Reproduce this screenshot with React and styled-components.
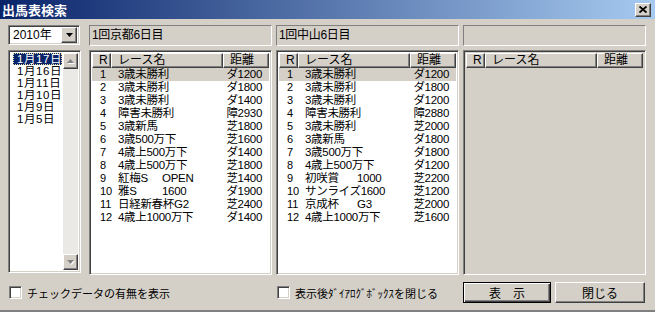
import React from 'react';
import styled, { createGlobalStyle, css } from 'styled-components';

const FONT = '"Liberation Sans", "Noto Sans CJK JP", sans-serif';

const GlobalStyle = createGlobalStyle`
  html, body {
    margin: 0;
    padding: 0;
    background: #d4d0c8;
  }
  * {
    box-sizing: border-box;
  }
`;

const raised = css`
  background: #d4d0c8;
  border: 1px solid;
  border-color: #ffffff #404040 #404040 #ffffff;
  box-shadow: inset -1px -1px #808080;
`;

const sunken = css`
  border: 1px solid;
  border-color: #808080 #ffffff #ffffff #808080;
  box-shadow: inset 1px 1px #404040, inset -1px -1px #d4d0c8;
`;

const DATES = ['1月17日', '1月16日', '1月11日', '1月10日', '1月9日', '1月5日'];

const KYOTO = [
  ['3歳未勝利', 'ダ1200'],
  ['3歳未勝利', 'ダ1800'],
  ['3歳未勝利', 'ダ1400'],
  ['障害未勝利', '障2930'],
  ['3歳新馬', '芝1800'],
  ['3歳500万下', '芝1600'],
  ['4歳上500万下', 'ダ1400'],
  ['4歳上500万下', '芝1800'],
  [['紅梅S', 'OPEN', 44], '芝1400'],
  [['雅S', '1600', 44], 'ダ1900'],
  ['日経新春杯G2', '芝2400'],
  ['4歳上1000万下', 'ダ1400'],
];

const NAKAYAMA = [
  ['3歳未勝利', 'ダ1200'],
  ['3歳未勝利', 'ダ1800'],
  ['3歳未勝利', 'ダ1200'],
  ['障害未勝利', '障2880'],
  ['3歳未勝利', '芝2000'],
  ['3歳新馬', 'ダ1800'],
  ['3歳500万下', 'ダ1800'],
  ['4歳上500万下', 'ダ1200'],
  [['初咲賞', '1000', 52], '芝2200'],
  ['サンライズ1600', '芝1200'],
  [['京成杯', 'G3', 52], '芝2000'],
  ['4歳上1000万下', '芝1600'],
];

export default function App() {
  return (
    <>
      <GlobalStyle />
      <Window>
        <TitleBar>
          <Title>出馬表検索</Title>
          <CloseButton>
            <svg width="8" height="7" viewBox="0 0 8 7">
              <path d="M0.5 0.5 L7.5 6.5 M7.5 0.5 L0.5 6.5" stroke="#000" strokeWidth="1.8" />
            </svg>
          </CloseButton>
        </TitleBar>

        <Main>
          <LeftColumn>
            <ComboBox>
              <ComboText>2010年</ComboText>
              <DropButton>
                <svg width="7" height="4" viewBox="0 0 7 4">
                  <polygon points="0,0 7,0 3.5,4" fill="#000" />
                </svg>
              </DropButton>
            </ComboBox>
            <DateList>
              <DateItems>
                {DATES.map((d, i) => (
                  <DateItem key={d} $selected={i === 0}>{d}</DateItem>
                ))}
              </DateItems>
              <ScrollBar>
                <ScrollArrow>
                  <DisabledTriangle up />
                </ScrollArrow>
                <ScrollArrow>
                  <DisabledTriangle />
                </ScrollArrow>
              </ScrollBar>
            </DateList>
          </LeftColumn>

          <Panels>
            <RacePanel title="1回京都6日目" races={KYOTO} />
            <RacePanel title="1回中山6日目" races={NAKAYAMA} />
            <RacePanel title="" races={[]} empty />
          </Panels>
        </Main>

        <Footer>
          <CheckLabel $width={268}>
            <CheckBox />
            チェックデータの有無を表示
          </CheckLabel>
          <CheckLabel $width={186}>
            <CheckBox />
            表示後ﾀﾞｲｱﾛｸﾞﾎﾞｯｸｽを閉じる
          </CheckLabel>
          <Button $width={88} $default>表　示</Button>
          <Button $width={90}>閉じる</Button>
        </Footer>
      </Window>
    </>
  );
}

function DisabledTriangle({ up }) {
  const pts = up ? '0,4 7,4 3.5,0' : '0,0 7,0 3.5,4';
  return (
    <svg width="8" height="5" viewBox="0 0 8 5">
      <polygon points={pts} fill="#ffffff" transform="translate(1,1)" />
      <polygon points={pts} fill="#808080" />
    </svg>
  );
}

function RacePanel({ title, races, empty }) {
  return (
    <Panel>
      <PanelHeader>{title}</PanelHeader>
      <RaceList $empty={empty}>
        <ListHeader>
          <HeaderCell>R</HeaderCell>
          <HeaderCell>レース名</HeaderCell>
          <HeaderCell>距離</HeaderCell>
        </ListHeader>
        {races.map(([name, dist], i) => (
          <Row key={i} $active={i === 0}>
            <Num>{i + 1}</Num>
            <Name>
              {Array.isArray(name) ? (
                <>
                  <Lead $width={name[2]}>{name[0]}</Lead>
                  {name[1]}
                </>
              ) : name}
            </Name>
            <Dist>{dist}</Dist>
          </Row>
        ))}
      </RaceList>
    </Panel>
  );
}

const Window = styled.div`
  width: 655px;
  height: 312px;
  display: flex;
  flex-direction: column;
  background: #d4d0c8;
  border-bottom: 2px solid #808080;
  font-family: ${FONT};
  font-size: 11px;
  color: #000;
`;

const TitleBar = styled.div`
  height: 19px;
  flex-shrink: 0;
  display: flex;
  align-items: center;
  justify-content: space-between;
  padding: 0 4px 0 2px;
  background: linear-gradient(to right, #0a246a, #a6caf0);
`;

const Title = styled.div`
  color: #fff;
  font-family: "Noto Sans CJK JP", sans-serif;
  font-weight: bold;
  font-size: 13px;
  line-height: 19px;
`;

const CloseButton = styled.div`
  ${raised};
  width: 16px;
  height: 14px;
  display: flex;
  align-items: center;
  justify-content: center;
`;

const Main = styled.div`
  display: flex;
  padding: 6px 0 0 8px;
`;

const LeftColumn = styled.div`
  width: 73px;
  display: flex;
  flex-direction: column;
  gap: 5px;
`;

const ComboBox = styled.div`
  ${sunken};
  width: 72px;
  height: 20px;
  background: #fff;
  display: flex;
  align-items: center;
  padding: 2px;
`;

const ComboText = styled.div`
  flex: 1;
  padding-left: 2px;
  font-size: 12px;
  line-height: 16px;
`;

const DropButton = styled.div`
  ${raised};
  width: 16px;
  height: 16px;
  display: flex;
  align-items: center;
  justify-content: center;
`;

const DateList = styled.div`
  ${sunken};
  height: 223px;
  background: #fff;
  display: flex;
  padding: 2px;
`;

const DateItems = styled.div`
  flex: 1;
  padding: 0 1px 0 2px;
`;

const DateItem = styled.div`
  height: 12px;
  line-height: 12px;
  padding-left: 4px;
  font-size: 11.5px;
  letter-spacing: 0.6px;
  white-space: nowrap;
  overflow: hidden;
  ${(p) => p.$selected && css`
    background: #0a246a;
    color: #fff;
    outline: 1px dotted #e8e0a0;
    outline-offset: -1px;
  `}
`;

const ScrollBar = styled.div`
  width: 16px;
  display: flex;
  flex-direction: column;
  justify-content: space-between;
  background: #ebe9e5;
`;

const ScrollArrow = styled.div`
  ${raised};
  height: 16px;
  display: flex;
  align-items: center;
  justify-content: center;
`;

const Panels = styled.div`
  display: flex;
  gap: 4px;
  margin-left: 8px;
`;

const Panel = styled.div`
  width: 183px;
  display: flex;
  flex-direction: column;
  gap: 4px;
`;

const PanelHeader = styled.div`
  height: 21px;
  border: 1px solid;
  border-color: #808080 #ffffff #ffffff #808080;
  padding-left: 2px;
  font-size: 12px;
  line-height: 19px;
  letter-spacing: -0.3px;
`;

const RaceList = styled.div`
  ${sunken};
  height: 225px;
  padding: 2px;
  background: ${(p) => (p.$empty ? '#d4d0c8' : '#fff')};
`;

const columns = css`
  display: grid;
  grid-template-columns: 19px 112px 1fr;
`;

const ListHeader = styled.div`
  ${columns};
  height: 15px;
`;

const HeaderCell = styled.div`
  ${raised};
  padding-left: 6px;
  font-size: 12px;
  line-height: 13px;
  white-space: nowrap;
`;

const Row = styled.div`
  ${columns};
  height: 13px;
  line-height: 13px;
  background: ${(p) => (p.$active ? '#d4d0c8' : 'transparent')};
  white-space: nowrap;
`;

const Num = styled.div`
  padding-left: 8px;
  font-size: 11px;
`;

const Name = styled.div`
  padding-left: 7px;
  font-size: 11.5px;
  letter-spacing: -0.3px;
`;

const Lead = styled.span`
  display: inline-block;
  width: ${(p) => p.$width}px;
`;

const Dist = styled.div`
  text-align: right;
  padding-right: 7px;
  font-size: 11.5px;
  letter-spacing: -0.3px;
`;

const Footer = styled.div`
  display: flex;
  align-items: center;
  height: 21px;
  margin-top: 7px;
  padding-left: 9px;
`;

const CheckLabel = styled.label`
  width: ${(p) => p.$width}px;
  display: flex;
  align-items: center;
  gap: 5px;
  font-size: 11px;
  white-space: nowrap;
`;

const CheckBox = styled.span`
  ${sunken};
  width: 13px;
  height: 13px;
  flex-shrink: 0;
  background: #fff;
`;

const Button = styled.div`
  ${raised};
  width: ${(p) => p.$width}px;
  height: 21px;
  margin-right: 4px;
  display: flex;
  align-items: center;
  justify-content: center;
  font-size: 12px;
  ${(p) => p.$default && css`
    border-color: #000;
    box-shadow: inset 1px 1px #ffffff, inset -1px -1px #404040, inset -2px -2px #808080;
  `}
`;
